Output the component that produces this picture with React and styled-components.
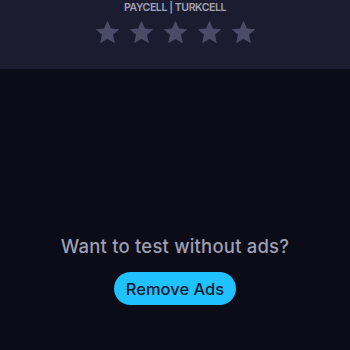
import styled, { createGlobalStyle } from "styled-components"

const Global = createGlobalStyle`
    body {
        margin: 0;
        background: #0b0c18;
        font-family: Inter, "Noto Sans", sans-serif;
    }
`
const Page = styled.div`
    width: 350px;
    height: 350px;
    display: flex;
    flex-direction: column;
    background: #0b0c18;
    overflow: hidden;
`
const TopPanel = styled.div`
    height: 69px;
    background: #1b1c2f;
    display: flex;
    flex-direction: column;
    align-items: center;
`
const Brand = styled.div`
    margin-top: 1px;
    font-size: 10.5px;
    line-height: 13px;
    font-weight: 600;
    color: #a3a3b6;
    letter-spacing: -0.4px;
`
const Stars = styled.div`
    display: flex;
    gap: 7px;
    margin-top: 5px;
`
const Body = styled.div`
    flex: 1;
    display: flex;
    flex-direction: column;
    align-items: center;
    padding-top: 166px;
`
const Question = styled.div`
    font-size: 18.5px;
    line-height: 22px;
    font-weight: 500;
    color: #9e9eb2;
    letter-spacing: 0.2px;
`
const RemoveBtn = styled.button`
    margin-top: 15px;
    width: 122px;
    height: 33px;
    border: none;
    border-radius: 17px;
    background: #1fc1fe;
    color: #0c1a33;
    font-family: inherit;
    font-size: 16.5px;
    font-weight: 500;
    padding: 0;
`

const Star = () => (
  <svg width="27" height="27" viewBox="0 0 24 24">
    <path
      d="M12 1.5l3.1 6.9 7.4.7-5.6 5 1.7 7.4L12 17.7l-6.6 3.8 1.7-7.4-5.6-5 7.4-.7z"
      fill="#4a4b66"
    />
  </svg>
)

const App = () => {
  return (
    <Page>
      <Global />
      <TopPanel>
        <Brand>PAYCELL | TURKCELL</Brand>
        <Stars>
          {[0, 1, 2, 3, 4].map((i) => <Star key={i} />)}
        </Stars>
      </TopPanel>
      <Body>
        <Question>Want to test without ads?</Question>
        <RemoveBtn>Remove Ads</RemoveBtn>
      </Body>
    </Page>
  )
}

export default App
